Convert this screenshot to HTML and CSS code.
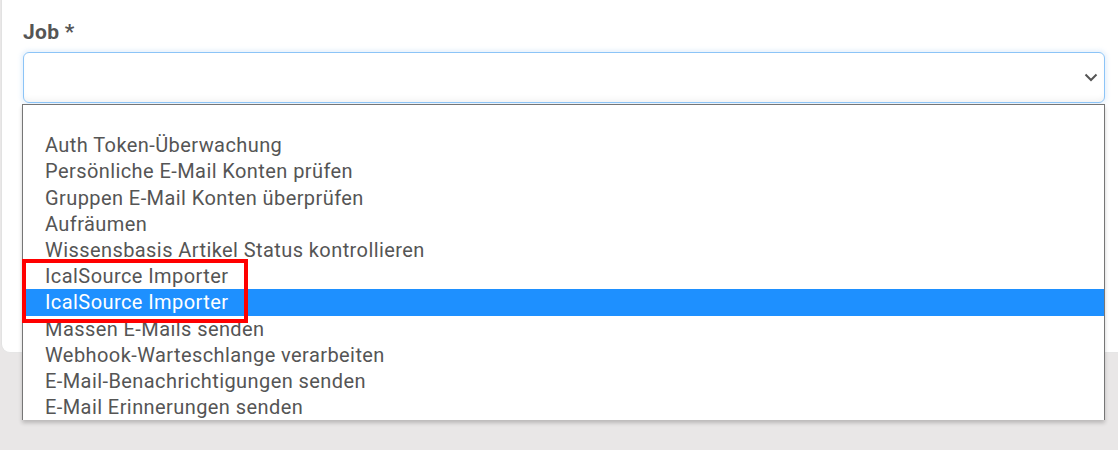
FILE: index.html
```html
<!DOCTYPE html>
<html lang="de">
  <head>
    <title>Job</title>
    <meta charset="UTF-8" />
    <meta name="viewport" content="width=device-width, initial-scale=1" />
    <link rel="stylesheet" href="styles.css">
  </head>
  <body>
    <div class="card">
      <label class="label">Job *</label>
      <div class="select">
        <svg class="chevron" width="14" height="9" viewBox="0 0 14 9">
          <path d="M1.5 1.5 L7 7 L12.5 1.5" fill="none" stroke="#555" stroke-width="2" />
        </svg>
      </div>
    </div>

    <ul class="options">
      <li></li>
      <li>Auth Token-Überwachung</li>
      <li>Persönliche E-Mail Konten prüfen</li>
      <li>Gruppen E-Mail Konten überprüfen</li>
      <li>Aufräumen</li>
      <li>Wissensbasis Artikel Status kontrollieren</li>
      <li>IcalSource Importer</li>
      <li class="active">IcalSource Importer</li>
      <li>Massen E-Mails senden</li>
      <li>Webhook-Warteschlange verarbeiten</li>
      <li>E-Mail-Benachrichtigungen senden</li>
      <li>E-Mail Erinnerungen senden</li>
    </ul>

    <!-- markierung -->
    <div class="mark"></div>
  </body>
</html>
```

FILE: styles.css
```css
body {
  margin: 0;
  padding: 0;
  background: #e9e7e7;
  font-family: Roboto, "Liberation Sans", sans-serif;
  color: #555;
  height: 450px;
  overflow: hidden;
  position: relative;
}
.card {
  background: #fff;
  height: 353px;
  margin-left: 1px;
  border-left: 1px solid #e2e2e2;
  border-bottom: 1px solid #e6e6e6;
  border-bottom-left-radius: 9px;
  padding: 18px 13px 0 21px;
  box-sizing: border-box;
}
.label {
  display: block;
  font-size: 21px;
  font-weight: bold;
  line-height: 28px;
  margin-bottom: 6px;
  letter-spacing: 0.3px;
}
.select {
  height: 51px;
  box-sizing: border-box;
  border: 1px solid #8cc4f7;
  border-radius: 6px;
  box-shadow: 0 0 4px 2px rgba(120, 180, 240, 0.18), inset 0 -5px 6px -3px rgba(0, 0, 0, 0.06);
  display: flex;
  align-items: center;
  justify-content: flex-end;
  padding-right: 6px;
}
.options {
  position: absolute;
  top: 104px;
  left: 22px;
  width: 1083px;
  margin: 0;
  padding: 1px 0 0 0;
  list-style: none;
  background: #fff;
  border: 1px solid #767676;
  border-bottom: none;
  box-sizing: border-box;
  box-shadow: 0 3px 4px rgba(0, 0, 0, 0.2);
}
.options li {
  height: 26.2px;
  line-height: 26.2px;
  padding-left: 22px;
  font-size: 20px;
  letter-spacing: 0.42px;
  white-space: nowrap;
}
.options li.active {
  background: #1e90ff;
  color: #fff;
}
.mark {
  position: absolute;
  top: 259px;
  left: 22px;
  width: 226px;
  height: 64px;
  box-sizing: border-box;
  border: 4px solid #f00;
}
```
